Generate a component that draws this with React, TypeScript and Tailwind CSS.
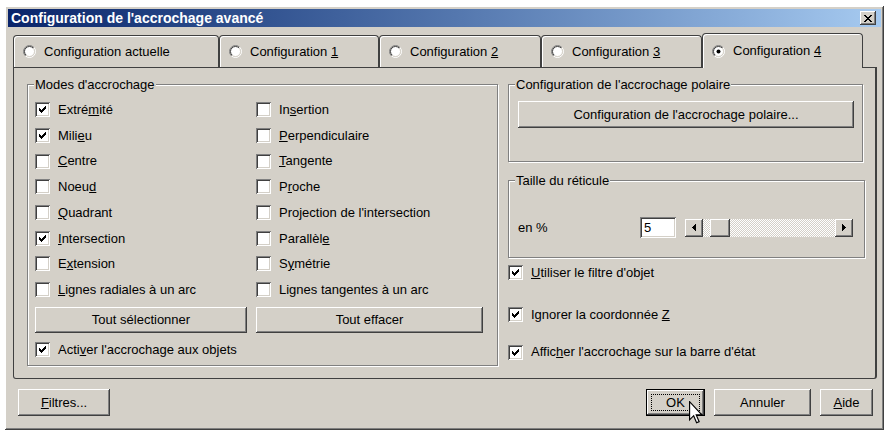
import type { ReactNode } from "react";

// ─── Bevels ───────────────────────────────────────────────────────────────────

const raised =
    "shadow-[inset_-1px_-1px_#404040,inset_1px_1px_#ffffff,inset_-2px_-2px_#808080,inset_2px_2px_#d4d0c8]";
const sunken =
    "shadow-[inset_1px_1px_#808080,inset_-1px_-1px_#ffffff,inset_2px_2px_#404040,inset_-2px_-2px_#d4d0c8]";
const etched = "border border-[#808080] shadow-[1px_1px_0_#ffffff,inset_1px_1px_0_#ffffff]";

// ─── Pixel glyphs ─────────────────────────────────────────────────────────────

const CHECK = ["......X", ".....XX", "X...XXX", "XX.XXX.", "XXXXX..", ".XXX...", "..X...."];
const CLOSE = ["XX....XX", ".XX..XX.", "..XXXX..", "...XX...", "..XXXX..", ".XX..XX.", "XX....XX"];
const LEFT = ["...X", "..XX", ".XXX", "XXXX", ".XXX", "..XX", "...X"];
const RIGHT = ["X...", "XX..", "XXX.", "XXXX", "XXX.", "XX..", "X..."];

function Pixels({ rows }: { rows: string[] }) {
    const w = rows[0].length;
    const h = rows.length;
    return (
        <svg width={w} height={h} viewBox={`0 0 ${w} ${h}`} shapeRendering="crispEdges">
            {rows.flatMap((r, y) =>
                [...r].map((c, x) =>
                    c === "X" ? <rect key={`${x}-${y}`} x={x} y={y} width={1} height={1} fill="#000" /> : null
                )
            )}
        </svg>
    );
}

// ─── Controls ─────────────────────────────────────────────────────────────────

function Radio({ on }: { on?: boolean }) {
    return (
        <svg width="13" height="13" viewBox="0 0 13 13" className="shrink-0">
            <defs>
                <linearGradient id="rOuter" x1="0" y1="0" x2="1" y2="1">
                    <stop offset="0.5" stopColor="#808080" />
                    <stop offset="0.5" stopColor="#ffffff" />
                </linearGradient>
                <linearGradient id="rInner" x1="0" y1="0" x2="1" y2="1">
                    <stop offset="0.5" stopColor="#404040" />
                    <stop offset="0.5" stopColor="#d4d0c8" />
                </linearGradient>
            </defs>
            <circle cx="6.5" cy="6.5" r="6" fill="none" stroke="url(#rOuter)" />
            <circle cx="6.5" cy="6.5" r="5" fill="#ffffff" stroke="url(#rInner)" />
            {on && <circle cx="6.5" cy="6.5" r="2" fill="#000" />}
        </svg>
    );
}

function Check({ checked, children, className = "" }: { checked?: boolean; children: ReactNode; className?: string }) {
    return (
        <div className={`flex items-center gap-[8px] h-[25.7px] ${className}`}>
            <span className={`w-[15px] h-[15px] shrink-0 bg-white flex items-center justify-center ${sunken}`}>
                {checked && <Pixels rows={CHECK} />}
            </span>
            <span className="whitespace-nowrap">{children}</span>
        </div>
    );
}

function Btn({ children, className = "" }: { children: ReactNode; className?: string }) {
    return (
        <button className={`flex items-center justify-center bg-[#d4d0c8] text-black ${raised} ${className}`}>
            {children}
        </button>
    );
}

function Tab({ children, width, selected }: { children: ReactNode; width: string; selected?: boolean }) {
    return (
        <div
            className={`${width} ${selected ? "h-[35px] -mb-px" : "h-[32px]"} flex items-center gap-[8px] pl-[9px] bg-[#d4d0c8] border border-b-0 border-[#404040] rounded-t-[4px] shadow-[inset_1px_1px_#ffffff]`}
        >
            <Radio on={selected} />
            <span className="whitespace-nowrap">{children}</span>
        </div>
    );
}

function Group({ label, className = "", children }: { label: string; className?: string; children: ReactNode }) {
    return (
        <fieldset className={`${etched} ${className}`}>
            <legend className="ml-[6px] px-[1px] leading-[15px] bg-[#d4d0c8]">{label}</legend>
            {children}
        </fieldset>
    );
}

function ArrowBtn({ rows }: { rows: string[] }) {
    return (
        <div className={`w-[18px] h-[18px] shrink-0 bg-[#d4d0c8] flex items-center justify-center ${raised}`}>
            <Pixels rows={rows} />
        </div>
    );
}

// ─── Dialog ───────────────────────────────────────────────────────────────────

export default function App() {
    return (
        <div className="relative w-[887px] h-[435px] overflow-hidden bg-white pt-[6px] pl-[5px] font-['Liberation_Sans',Arial,sans-serif] text-[13px] text-black">
            <div className={`w-[879px] h-[424px] bg-[#d4d0c8] p-[3px] flex flex-col ${raised}`}>
                {/* title bar */}
                <div className="h-[18px] shrink-0 flex items-center justify-between pl-[3px] pr-[5px] bg-linear-to-r from-[#0a246a] to-[#a6caf0]">
                    <span className="text-white font-bold text-[14px] leading-none">
                        Configuration de l'accrochage avancé
                    </span>
                    <div className={`w-[16px] h-[14px] bg-[#d4d0c8] flex items-center justify-center ${raised}`}>
                        <Pixels rows={CLOSE} />
                    </div>
                </div>

                {/* tabs */}
                <div className="relative z-10 mt-[6px] ml-[5px] h-[34px] flex items-end">
                    <Tab width="w-[206px]">Configuration actuelle</Tab>
                    <Tab width="w-[160px]">Configuration <u>1</u></Tab>
                    <Tab width="w-[162px]">Configuration <u>2</u></Tab>
                    <Tab width="w-[161px]">Configuration <u>3</u></Tab>
                    <Tab width="w-[161px]" selected>Configuration <u>4</u></Tab>
                </div>

                {/* tab panel */}
                <div className="ml-[5px] w-[864px] h-[312px] shrink-0 border border-r-2 border-[#404040] rounded-b-[3px] pt-[9px] pl-[13px] flex gap-[10px]">
                    <Group label="Modes d'accrochage" className="w-[471px] h-[289px]">
                        <div className="pt-[5px] pl-[7px]">
                            <div className="grid grid-cols-[221px_1fr]">
                                <Check checked>Extré<u>m</u>ité</Check>
                                <Check>In<u>s</u>ertion</Check>
                                <Check checked>Mili<u>e</u>u</Check>
                                <Check><u>P</u>erpendiculaire</Check>
                                <Check><u>C</u>entre</Check>
                                <Check><u>T</u>angente</Check>
                                <Check>Noeu<u>d</u></Check>
                                <Check>P<u>r</u>oche</Check>
                                <Check><u>Q</u>uadrant</Check>
                                <Check>Projection de l'intersection</Check>
                                <Check checked><u>I</u>ntersection</Check>
                                <Check>Parallèl<u>e</u></Check>
                                <Check>E<u>x</u>tension</Check>
                                <Check>S<u>y</u>métrie</Check>
                                <Check><u>L</u>ignes radiales à un arc</Check>
                                <Check>Lignes tangentes à un arc</Check>
                            </div>
                            <div className="mt-[4px] flex gap-[9px]">
                                <Btn className="w-[212px] h-[26px]">Tout sélectionner</Btn>
                                <Btn className="w-[227px] h-[26px]">Tout effacer</Btn>
                            </div>
                            <Check checked className="mt-[4px]">Acti<u>v</u>er l'accrochage aux objets</Check>
                        </div>
                    </Group>

                    <div className="w-[357px] flex flex-col">
                        <Group label="Configuration de l'accrochage polaire" className="w-[355px] h-[85px]">
                            <div className="pt-[9px] pl-[9px]">
                                <Btn className="w-[336px] h-[27px]">Configuration de l'accrochage polaire...</Btn>
                            </div>
                        </Group>

                        <Group label="Taille du réticule" className="mt-[11px] w-[357px] h-[85px]">
                            <div className="pt-[29px] pl-[9px] flex items-center">
                                <span className="w-[122px]">en %</span>
                                <div className={`w-[36px] h-[21px] bg-white pl-[4px] flex items-center ${sunken}`}>5</div>
                                <div className="ml-[9px] w-[168px] h-[18px] flex">
                                    <ArrowBtn rows={LEFT} />
                                    <div className="w-[7px] bg-[repeating-conic-gradient(#ffffff_0_25%,#d4d0c8_0_50%)] bg-[length:2px_2px]" />
                                    <div className={`w-[20px] h-full bg-[#d4d0c8] ${raised}`} />
                                    <div className="flex-1 bg-[repeating-conic-gradient(#ffffff_0_25%,#d4d0c8_0_50%)] bg-[length:2px_2px]" />
                                    <ArrowBtn rows={RIGHT} />
                                </div>
                            </div>
                        </Group>

                        <Check checked className="mt-[2px]"><u>U</u>tiliser le filtre d'objet</Check>
                        <Check checked className="mt-[16px]">Ignorer la coordonnée <u>Z</u></Check>
                        <Check checked className="mt-[12px]">Affic<u>h</u>er l'accrochage sur la barre d'état</Check>
                    </div>
                </div>

                {/* bottom buttons */}
                <div className="mt-[10px] h-[27px] pl-[10px] pr-[8px] flex items-center justify-between">
                    <Btn className="w-[92px] h-[27px]"><u>F</u>iltres...</Btn>
                    <div className="flex gap-[9px]">
                        <button className={`relative w-[59px] h-[27px] border border-black bg-[#d4d0c8] ${raised}`}>
                            <span className="absolute inset-[4px] border border-dotted border-black" />
                            OK
                        </button>
                        <Btn className="w-[97px] h-[27px]">Annuler</Btn>
                        <Btn className="w-[53px] h-[27px]"><u>A</u>ide</Btn>
                    </div>
                </div>
            </div>

            {/* mouse pointer over OK */}
            <svg className="absolute left-[689px] top-[401px]" width="14" height="23" viewBox="0 0 12 19.5">
                <path
                    d="M0.5 0.5 L0.5 16 L4 12.5 L6.5 18.5 L8.7 17.6 L6.2 11.8 L11 11.8 Z"
                    fill="#ffffff"
                    stroke="#000"
                    strokeWidth="1"
                    strokeLinejoin="miter"
                />
            </svg>
        </div>
    );
}
